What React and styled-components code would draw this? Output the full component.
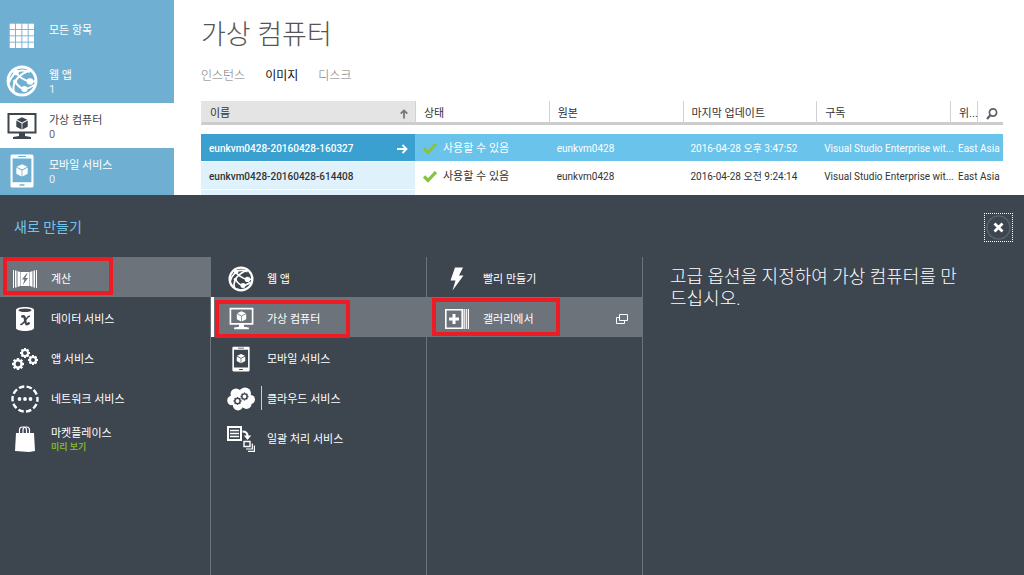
import React, { useState } from "react";
import styled, { createGlobalStyle } from "styled-components";

const navItems = [
	{ id: "all", label: "모든 항목", icon: GridIcon },
	{ id: "web", label: "웹 앱", count: 1, icon: GlobeIcon },
	{ id: "vm", label: "가상 컴퓨터", count: 0, icon: MonitorIcon },
	{ id: "mobile", label: "모바일 서비스", count: 0, icon: PhoneIcon },
];

const tabs = ["인스턴스", "이미지", "디스크"];

const images = [
	{
		name: "eunkvm0428-20160428-160327",
		source: "eunkvm0428",
		updated: "2016-04-28 오후 3:47:52",
	},
	{
		name: "eunkvm0428-20160428-614408",
		source: "eunkvm0428",
		updated: "2016-04-28 오전 9:24:14",
	},
];

const categories = [
	{ label: "계산", icon: ComputeIcon, mark: "category" },
	{ label: "데이터 서비스", icon: DataIcon },
	{ label: "앱 서비스", icon: GearsIcon },
	{ label: "네트워크 서비스", icon: NetworkIcon },
	{ label: "마켓플레이스", icon: BagIcon, note: "미리 보기" },
];

const services = [
	{ label: "웹 앱", icon: GlobeIcon },
	{ label: "가상 컴퓨터", icon: MonitorIcon, mark: "service" },
	{ label: "모바일 서비스", icon: PhoneIcon },
	{ label: "클라우드 서비스", icon: CloudIcon, caret: true },
	{ label: "일괄 처리 서비스", icon: BatchIcon },
];

const methods = [
	{ label: "빨리 만들기", icon: BoltIcon },
	{ label: "갤러리에서", icon: GalleryIcon, mark: "method", popup: true },
];

export default function App() {
	const [tab, setTab] = useState("이미지");
	const [nav, setNav] = useState("vm");
	const [row, setRow] = useState(0);

	return (
		<Page>
			<GlobalStyle />
			<Top>
				<Sidebar>
					{navItems.map(({ id, label, count, icon: Icon }) => (
						<NavLink
							key={id}
							href={`#${id}`}
							$active={nav === id}
							onClick={() => setNav(id)}
						>
							<IconBox>
								<Icon large />
							</IconBox>
							<NavText>
								{label}
								{count !== undefined && <NavCount>{count}</NavCount>}
							</NavText>
						</NavLink>
					))}
				</Sidebar>

				<Main>
					<Title>가상 컴퓨터</Title>
					<Tabs>
						{tabs.map((name) => (
							<Tab
								key={name}
								type="button"
								$active={tab === name}
								onClick={() => setTab(name)}
							>
								{name}
							</Tab>
						))}
					</Tabs>

					<Table>
						<colgroup>
							<Col $width="214px" />
							<Col />
							<Col />
							<Col />
							<Col />
							<Col $width="27px" />
							<Col $width="26px" />
						</colgroup>
						<thead>
							<tr>
								<Th $sorted>
									<SortButton type="button">
										이름
										<SortIcon />
									</SortButton>
								</Th>
								<Th>상태</Th>
								<Th>원본</Th>
								<Th>마지막 업데이트</Th>
								<Th>구독</Th>
								<Th>위...</Th>
								<Th>
									<SearchButton type="button" aria-label="검색">
										<SearchIcon />
									</SearchButton>
								</Th>
							</tr>
						</thead>
						<tbody>
							{images.map((image, i) => (
								<Row
									key={image.name}
									$active={row === i}
									onClick={() => setRow(i)}
								>
									<NameCell $active={row === i}>
										<NameInner>
											{image.name}
											{row === i && <ArrowIcon />}
										</NameInner>
									</NameCell>
									<Td>
										<Status>
											<CheckIcon />
											사용할 수 있음
										</Status>
									</Td>
									<Td>{image.source}</Td>
									<Td>{image.updated}</Td>
									<Td>Visual Studio Enterprise wit...</Td>
									<Td colSpan={2}>East Asia</Td>
								</Row>
							))}
							<EmptyRow>
								<td />
								<td colSpan={6} />
							</EmptyRow>
						</tbody>
					</Table>
				</Main>
			</Top>

			<Drawer>
				<DrawerHeader>
					<DrawerTitle>새로 만들기</DrawerTitle>
					<CloseButton type="button" aria-label="닫기">
						<CloseIcon />
					</CloseButton>
				</DrawerHeader>
				<Columns>
					<MenuColumn items={categories} initial="계산" first />
					<MenuColumn items={services} initial="가상 컴퓨터" bar />
					<MenuColumn items={methods} initial="갤러리에서" />
					<Description>
						고급 옵션을 지정하여 가상 컴퓨터를 만드십시오.
					</Description>
				</Columns>
			</Drawer>
		</Page>
	);
}

function MenuColumn({ items, initial, first, bar }) {
	const [selected, setSelected] = useState(initial);

	return (
		<Menu>
			{items.map(({ label, icon: Icon, note, mark, caret, popup }) => (
				<MenuButton
					key={label}
					type="button"
					$first={first}
					$active={selected === label}
					$bar={bar && selected === label}
					onClick={() => setSelected(label)}
				>
					<IconBox>
						<Icon />
					</IconBox>
					<MenuText $caret={caret}>
						{label}
						{note && <Note>{note}</Note>}
					</MenuText>
					{popup && <PopupIcon />}
					{mark && <Mark $kind={mark} />}
				</MenuButton>
			))}
		</Menu>
	);
}

/* icons */

function GridIcon() {
	const steps = [0, 1, 2, 3];
	return (
		<svg width="26" height="26" viewBox="0 0 26 26" fill="#fff">
			{steps.map((y) =>
				steps.map((x) => (
					<rect
						key={`${x}${y}`}
						x={0.7 + x * 6.3}
						y={0.7 + y * 6.3}
						width="5.4"
						height="5.4"
					/>
				))
			)}
		</svg>
	);
}

function GlobeIcon({ large }) {
	const size = large ? 32 : 26;
	return (
		<svg width={size} height={size} viewBox="0 0 32 32" fill="none">
			<circle cx="16" cy="16" r="14" stroke="#fff" strokeWidth="2.8" />
			<g stroke="#fff" strokeWidth="2">
				<path d="M10 7 C14 5 19 5 24 7" />
				<path d="M10 8 C13 12 18 15 24 17 L30 16" />
				<path d="M10 7 C6 11 4 14 3 18" />
				<path d="M24 5 C17 8 11 12 9 17 C7 21 7 24 8 27" />
				<path d="M9 16 C11 20 14 23 18 24" />
				<path d="M18 24 C22 24 25 22 28 20" />
			</g>
			<g fill="#fff">
				<circle cx="10" cy="7.5" r="2.8" />
				<circle cx="24" cy="16.5" r="3.3" />
				<circle cx="18.5" cy="24" r="3.1" />
				<circle cx="9" cy="16.5" r="2" />
			</g>
		</svg>
	);
}

function MonitorIcon({ large }) {
	return (
		<svg
			width={large ? 30 : 25}
			height={large ? 28 : 23}
			viewBox="0 0 30 28"
			fill="currentColor"
		>
			<path
				fillRule="evenodd"
				d="M0.5 1 H29.5 V21.5 H0.5 Z M2.5 3 V19.5 H27.5 V3 Z"
			/>
			<path d="M12 21 H18 V24 L24 25 V27 H6 V25 L12 24 Z" />
			<path d="M15 5.2 L20.3 7.7 L15 10.6 L9.7 7.7 Z" />
			<path d="M9.3 8.6 L14.6 11.4 V17.6 L9.3 14.8 Z" />
			<path d="M20.7 8.6 L15.4 11.4 V17.6 L20.7 14.8 Z" />
		</svg>
	);
}

function PhoneIcon({ large }) {
	return (
		<svg
			width={large ? 24 : 18}
			height={large ? 34 : 26}
			viewBox="0 0 24 34"
			fill="#fff"
		>
			<path
				fillRule="evenodd"
				d="M2 0.5 H22 Q23.5 0.5 23.5 2 V32 Q23.5 33.5 22 33.5 H2 Q0.5 33.5 0.5 32 V2 Q0.5 0.5 2 0.5 Z M2.6 4.5 V28.3 H21.4 V4.5 Z M8 2 V3 H16 V2 Z M9.5 30.3 V31.7 H14.5 V30.3 Z"
			/>
			<path d="M12 10.2 L17.3 12.7 L12 15.6 L6.7 12.7 Z" />
			<path d="M6.3 13.6 L11.6 16.4 V22.6 L6.3 19.8 Z" />
			<path d="M17.7 13.6 L12.4 16.4 V22.6 L17.7 19.8 Z" />
		</svg>
	);
}

function ComputeIcon() {
	return (
		<svg width="24" height="18" viewBox="0 0 24 18" fill="#fff">
			<rect x="0" y="0" width="1" height="18" />
			<rect x="2" y="0.5" width="1.5" height="17" />
			<path d="M4.5 1 L7 2 V16 L4.5 17 Z" />
			<path
				fillRule="evenodd"
				d="M7.5 2 H16.5 V16 H7.5 Z M13.5 3.5 L9 9.5 H11.5 L9.8 15 L15 8 H12.3 L14.5 3.5 Z"
			/>
			<path d="M19.5 1 L17 2 V16 L19.5 17 Z" />
			<rect x="20.5" y="0.5" width="1.5" height="17" />
			<rect x="23" y="0" width="1" height="18" />
		</svg>
	);
}

function DataIcon() {
	return (
		<svg width="20" height="26" viewBox="0 0 20 26">
			<path
				d="M1 4 C1 0 19 0 19 4 V22 C19 26 1 26 1 22 Z"
				fill="#fff"
			/>
			<ellipse cx="10" cy="4.2" rx="6.5" ry="1.8" fill="#3d454f" />
			<g fill="none" stroke="#3d454f" strokeLinecap="round">
				<path
					d="M7.3 10.5 C10 9.5 9.8 12.5 10.2 14.5 C10.6 18.4 11.5 19 13.8 17.3"
					strokeWidth="2.4"
				/>
				<path d="M14.5 10.3 C11.5 10.3 9 18.8 5.8 18.4" strokeWidth="1.5" />
			</g>
		</svg>
	);
}

function Gear({ x, y, r, color = "#fff", width = 2.2 }) {
	const teeth = [0, 45, 90, 135, 180, 225, 270, 315];
	return (
		<g transform={`translate(${x} ${y})`} stroke={color} fill="none">
			<circle r={r} strokeWidth={width} />
			{teeth.map((a) => (
				<path
					key={a}
					d={`M0 ${-r} V${-r - width}`}
					strokeWidth={width}
					transform={`rotate(${a})`}
				/>
			))}
		</g>
	);
}

function GearsIcon() {
	return (
		<svg width="28" height="24" viewBox="0 0 28 24">
			<Gear x={14} y={6} r={3} width={2} />
			<Gear x={7} y={17} r={3.6} width={2.4} />
			<Gear x={22} y={13} r={3} width={2} />
		</svg>
	);
}

function NetworkIcon() {
	return (
		<svg width="28" height="28" viewBox="0 0 28 28">
			<circle
				cx="14"
				cy="14"
				r="12.5"
				fill="none"
				stroke="#fff"
				strokeWidth="2.4"
				strokeDasharray="5.5 2.354"
				strokeDashoffset="2.7"
			/>
			<g fill="#fff">
				<circle cx="8.5" cy="14" r="1.9" />
				<circle cx="14" cy="14" r="1.9" />
				<circle cx="19.5" cy="14" r="1.9" />
			</g>
		</svg>
	);
}

function BagIcon() {
	return (
		<svg width="22" height="26" viewBox="0 0 22 26">
			<path d="M2 7 H20 L21 25 L15 26 L1 25 Z" fill="#fff" />
			<g fill="none" stroke="#fff" strokeWidth="1.2">
				<path d="M5.5 8 V4 Q5.5 1 8.5 1 H9.5 Q12.5 1 12.5 4 V8" />
				<path d="M9 8 V4 Q9 1 12 1 H12.5 Q15.5 1 15.5 4 V8" />
			</g>
		</svg>
	);
}

function CloudIcon() {
	return (
		<svg width="28" height="24" viewBox="0 0 28 24">
			<g fill="#fff">
				<circle cx="9" cy="7" r="5.5" />
				<circle cx="18" cy="6.5" r="6" />
				<circle cx="5" cy="13.5" r="4.8" />
				<circle cx="23.5" cy="12.5" r="4.5" />
				<circle cx="11" cy="18.5" r="5" />
				<circle cx="19.5" cy="17" r="5" />
				<rect x="6" y="7" width="16" height="12" />
			</g>
			<Gear x={10.5} y={14} r={2.6} color="#3d454f" width={1.4} />
			<Gear x={17.5} y={9.5} r={2.6} color="#3d454f" width={1.4} />
		</svg>
	);
}

function BatchIcon() {
	return (
		<svg width="28" height="26" viewBox="0 0 28 26" fill="none">
			<g stroke="#fff">
				<path d="M1 1 H14 V14 H1 Z" strokeWidth="2" />
				<path d="M3 4.5 H12 M3 7.5 H12 M3 10.5 H12" strokeWidth="1.4" />
				<path d="M15.5 5.5 Q20.5 5.500 20.5 10" strokeWidth="2.2" />
				<path d="M17 15.5 H23 V20.5 H17 Z" strokeWidth="1.4" />
				<path d="M19 23 H25.300 V17.500" strokeWidth="1.2" />
				<path d="M21 25.300 H27.400 V19.500" strokeWidth="1.2" />
			</g>
			<path d="M16.800 9.500 H24.200 L20.500 14 Z" fill="#fff" />
		</svg>
	);
}

function BoltIcon() {
	return (
		<svg width="16" height="24" viewBox="0 0 16 24" fill="#fff">
			<path d="M6 0.5 H14 L10 8.5 H14.5 L3.5 23.5 L6.5 13.5 H1.5 Z" />
		</svg>
	);
}

function GalleryIcon() {
	return (
		<svg width="24" height="22" viewBox="0 0 24 22" fill="#fff">
			<path
				fillRule="evenodd"
				d="M0 1 H18 V21 H0 Z M1.6 2.6 V19.4 H16.4 V2.6 Z"
			/>
			<path d="M7.5 6 H10.5 V9.5 H14 V12.5 H10.5 V16 H7.5 V12.5 H4 V9.5 H7.5 Z" />
			<rect x="18.5" y="1" width="1.3" height="20" />
			<rect x="20.7" y="1" width="1.2" height="20" />
			<rect x="22.8" y="1" width="1.2" height="20" />
		</svg>
	);
}

function PopupIcon() {
	return (
		<svg width="12" height="10" viewBox="0 0 12 10" fill="none" stroke="#fff">
			<path d="M3.5 0.5 H11.5 V6.5 H3.5 Z" />
			<path d="M3 3.5 H0.5 V9.5 H8.5 V7" />
		</svg>
	);
}

function SortIcon() {
	return (
		<svg width="8" height="10" viewBox="0 0 8 10" fill="none">
			<path
				d="M4 9.5 V1.5 M0.7 4.7 L4 1.4 L7.3 4.7"
				stroke="#777"
				strokeWidth="1.8"
			/>
		</svg>
	);
}

function ArrowIcon() {
	return (
		<svg width="11" height="10" viewBox="0 0 11 10" fill="none">
			<path
				d="M0 5 H9.5 M5.5 1 L9.5 5 L5.5 9"
				stroke="#fff"
				strokeWidth="1.8"
			/>
		</svg>
	);
}

function CheckIcon() {
	return (
		<svg width="14" height="12" viewBox="0 0 14 12" fill="none">
			<path d="M1 5.5 L5 9.5 L13 1" stroke="#85c440" strokeWidth="3.2" />
		</svg>
	);
}

function SearchIcon() {
	return (
		<svg width="12" height="12" viewBox="0 0 12 12" fill="none">
			<circle cx="7" cy="4.5" r="3.6" stroke="#59616b" strokeWidth="1.7" />
			<path d="M4.5 7 L1 11" stroke="#59616b" strokeWidth="2.2" />
		</svg>
	);
}

function CloseIcon() {
	return (
		<svg width="25" height="25" viewBox="0 0 25 25" fill="none">
			<circle cx="12.5" cy="12.5" r="11.5" stroke="#59606b" strokeWidth="1.5" />
			<path
				d="M8.5 8.5 L16.5 16.5 M16.5 8.5 L8.5 16.5"
				stroke="#fff"
				strokeWidth="2.8"
			/>
		</svg>
	);
}

/* styles */

const GlobalStyle = createGlobalStyle`
	* {
		box-sizing: border-box;
	}

	body {
		margin: 0;
		background: #fff;
		color: #333;
		font-family: Roboto, "Noto Sans CJK KR", sans-serif;
		font-size: 11px;
		line-height: 14px;
	}

	button {
		padding: 0;
		border: 0;
		background: none;
		color: inherit;
		font: inherit;
		text-align: left;
		cursor: pointer;
	}

	svg {
		display: block;
		flex-shrink: 0;
	}
`;

const Page = styled.div`
	display: flex;
	flex-direction: column;
	min-height: 100vh;
`;

const Top = styled.div`
	display: flex;
`;

const Sidebar = styled.nav`
	flex: 0 0 174px;
	padding: 13px 0 2px;
	background: #6fb0d2;
`;

const NavLink = styled.a`
	display: flex;
	gap: 11px;
	height: 45px;
	padding: 0 6px;
	color: ${({ $active }) => ($active ? "#3d454f" : "#fff")};
	background: ${({ $active }) => ($active ? "#fff" : "transparent")};
	text-decoration: none;
`;

const IconBox = styled.span`
	display: flex;
	align-items: center;
	justify-content: center;
	flex: 0 0 32px;
`;

const NavText = styled.span`
	display: flex;
	flex-direction: column;
	padding-top: 11px;
`;

const NavCount = styled.span`
	opacity: 0.8;
`;

const Main = styled.main`
	flex: 1;
	min-width: 0;
	padding: 17px 21px 0 27px;
`;

const Title = styled.h1`
	margin: 0 0 14px;
	color: #555;
	font-size: 27px;
	font-weight: 300;
	line-height: 36px;
`;

const Tabs = styled.div`
	display: flex;
	gap: 20px;
	margin-bottom: 16px;
`;

const Tab = styled.button`
	color: ${({ $active }) => ($active ? "#111" : "#777")};
	font-size: 12px;
	font-weight: ${({ $active }) => ($active ? 400 : 300)};
	line-height: 18px;
`;

const Table = styled.table`
	width: 100%;
	table-layout: fixed;
	border-spacing: 0;

	tbody::before {
		content: "";
		display: block;
		height: 9px;
	}
`;

const Col = styled.col`
	width: ${({ $width }) => $width || "auto"};
`;

const Th = styled.th`
	height: 24px;
	padding: 4px 0 0 8px;
	border-left: 1px solid ${({ $sorted }) => ($sorted ? "#e4e4e4" : "#d2d2d2")};
	border-bottom: 3px solid #ccc;
	background: ${({ $sorted }) => ($sorted ? "#e4e4e4" : "#fff")};
	font-weight: 400;
	text-align: left;
	white-space: nowrap;
`;

const SortButton = styled.button`
	display: flex;
	align-items: center;
	justify-content: space-between;
	width: 100%;
	padding-right: 7px;
`;

const SearchButton = styled.button`
	display: block;
`;

const Row = styled.tr`
	height: 28px;
	background: ${({ $active }) => ($active ? "#6ac3ea" : "#fff")};
	color: ${({ $active }) => ($active ? "#fff" : "#333")};
	cursor: default;
`;

const Td = styled.td`
	padding: 2px 0 0 8px;
	border-bottom: 1px solid #fff;
	font-size: 10px;
	white-space: nowrap;
`;

const NameCell = styled(Td)`
	background: ${({ $active }) => ($active ? "#3aa0cf" : "#dff1fb")};
	font-weight: 500;
`;

const NameInner = styled.div`
	display: flex;
	align-items: center;
	justify-content: space-between;
	padding-right: 7px;
`;

const Status = styled.div`
	display: flex;
	align-items: center;
	gap: 6px;
	font-size: 11px;
`;

const EmptyRow = styled.tr`
	height: 5px;

	td {
		padding: 0;
	}

	td:first-child {
		background: #dff1fb;
	}
`;

const Drawer = styled.section`
	display: flex;
	flex-direction: column;
	flex: 1;
	background: #3d454f;
	color: #fff;
`;

const DrawerHeader = styled.header`
	display: flex;
	align-items: center;
	justify-content: space-between;
	height: 62px;
	padding: 2px 11px 0 14px;
`;

const DrawerTitle = styled.h2`
	margin: 0;
	color: #74c5ec;
	font-size: 14px;
	font-weight: 400;
	line-height: 20px;
`;

const CloseButton = styled.button`
	padding: 1px;
	border: 1px dotted #fff;
`;

const Columns = styled.div`
	display: grid;
	grid-template-columns: 211px 216px 216px 1fr;
	flex: 1;
`;

const Menu = styled.div`
	border-right: 1px solid #6d737b;
`;

const MenuButton = styled.button`
	position: relative;
	display: flex;
	align-items: center;
	gap: 10px;
	width: 100%;
	height: 40px;
	padding: 3px 14px 0 ${({ $first }) => ($first ? "9px" : "14px")};
	background: ${({ $active }) => ($active ? "#6d737b" : "transparent")};
	box-shadow: ${({ $bar }) => ($bar ? "inset 3px 0 #fff" : "none")};
`;

const MenuText = styled.span`
	position: relative;
	flex: 1;
	padding-top: 3px;

	&::before {
		content: "";
		display: ${({ $caret }) => ($caret ? "block" : "none")};
		position: absolute;
		top: -4px;
		left: -6px;
		height: 24px;
		border-left: 1px solid #ccc;
	}
`;

const Note = styled.span`
	display: block;
	color: #7fb02f;
	font-size: 9px;
	font-weight: 700;
	line-height: 12px;
`;

const markBox = {
	category: "top: 0; left: 3px; width: 110px;",
	service: "top: 3px; left: 4px; width: 135px;",
	method: "top: 1px; left: 5px; width: 128px;",
};

/* red frame over the item to click */
const Mark = styled.span`
	position: absolute;
	${({ $kind }) => markBox[$kind]}
	height: 38px;
	border: 4px solid #ed1c24;
	pointer-events: none;
`;

const Description = styled.p`
	max-width: 320px;
	margin: 0;
	padding: 9px 0 0 27px;
	font-size: 18px;
	font-weight: 300;
	line-height: 22px;
`;
